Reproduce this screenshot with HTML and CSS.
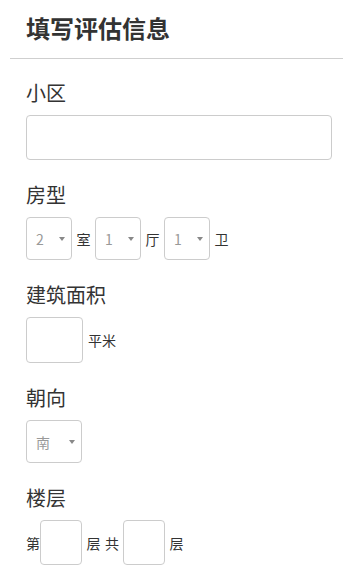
FILE: index.html
```html
<!DOCTYPE html>
<html lang="zh-CN">
<head>
<meta charset="utf-8">
<title>填写评估信息</title>
<link rel="stylesheet" href="styles.css">
</head>
<body>
<header class="header">
  <h1 class="title">填写评估信息</h1>
</header>
<form class="form">
  <div class="group">
    <div class="label">小区</div>
    <input class="input input-full" type="text">
  </div>
  <div class="group">
    <div class="label">房型</div>
    <div class="row">
      <div class="select select-sm"><span class="value">2</span><span class="arrow"></span></div>
      <span class="unit">室</span>
      <div class="select select-sm"><span class="value">1</span><span class="arrow"></span></div>
      <span class="unit">厅</span>
      <div class="select select-sm"><span class="value">1</span><span class="arrow"></span></div>
      <span class="unit">卫</span>
    </div>
  </div>
  <div class="group">
    <div class="label">建筑面积</div>
    <div class="row">
      <input class="input input-area" type="text">
      <span class="unit unit-after">平米</span>
    </div>
  </div>
  <div class="group">
    <div class="label">朝向</div>
    <div class="row">
      <div class="select select-md"><span class="value">南</span><span class="arrow"></span></div>
    </div>
  </div>
  <div class="group">
    <div class="label">楼层</div>
    <div class="row">
      <span class="unit-plain">第</span>
      <input class="input input-floor" type="text">
      <span class="unit">层</span>
      <span class="unit-plain unit-total">共</span>
      <input class="input input-floor" type="text">
      <span class="unit">层</span>
    </div>
  </div>
</form>
</body>
</html>
```
FILE: styles.css
```css
* { box-sizing: border-box; }
body {
  margin: 0;
  background: #fff;
  color: #333;
  font-family: "Noto Sans CJK SC", "Noto Sans", sans-serif;
}
.header {
  margin-left: 10px;
  padding: 12px 0 14px 16px;
  border-bottom: 1px solid #cfcfcf;
}
.title {
  margin: 0;
  font-size: 24px;
  line-height: 32px;
  font-weight: 700;
  color: #333;
}
.form {
  padding: 21px 11px 0 26px;
}
.group + .group {
  margin-top: 22px;
}
.label {
  font-size: 20px;
  line-height: 26px;
  margin-bottom: 9px;
  color: #333;
}
.input {
  display: block;
  border: 1px solid #ccc;
  border-radius: 4px;
  background: #fff;
  margin: 0;
  padding: 0 8px;
  font: inherit;
  outline: none;
}
.input-full {
  width: 100%;
  height: 45px;
}
.input-area {
  width: 57px;
  height: 46px;
}
.input-floor {
  width: 42px;
  height: 45px;
}
.row {
  display: flex;
  align-items: center;
}
.select {
  display: flex;
  align-items: center;
  justify-content: space-between;
  height: 43px;
  border: 1px solid #ccc;
  border-radius: 4px;
  padding: 0 6px 0 9px;
}
.select-sm { width: 46px; }
.select-md { width: 56px; }
.value {
  font-size: 14px;
  color: #999;
}
.arrow {
  width: 0;
  height: 0;
  border-left: 3px solid transparent;
  border-right: 3px solid transparent;
  border-top: 4px solid #888;
  margin-top: 1px;
}
.unit {
  font-size: 14px;
  line-height: 20px;
  margin: 0 4.5px;
  color: #333;
}
.unit-after {
  margin-left: 5px;
}
.unit-plain {
  font-size: 14px;
  line-height: 20px;
  color: #333;
}
.unit-total {
  margin-right: 4px;
}
```
